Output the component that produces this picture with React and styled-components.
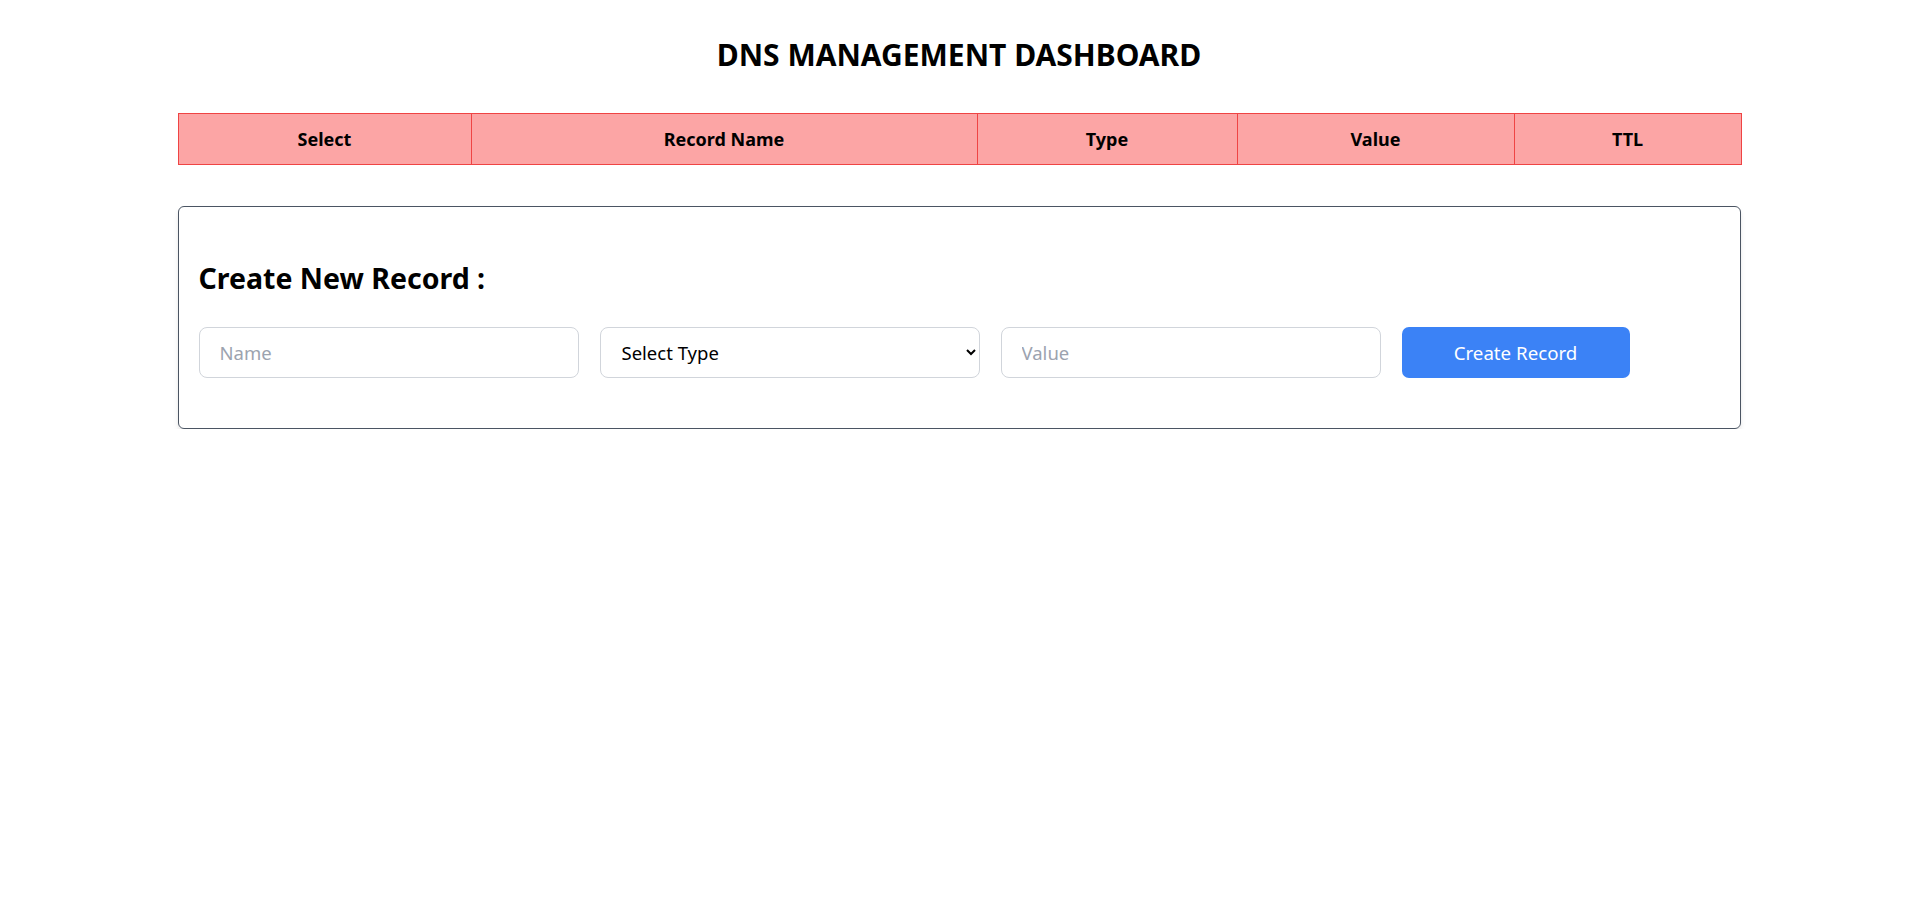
import React from "react";
import styled, { createGlobalStyle } from "styled-components";

const GlobalStyle = createGlobalStyle`
  body {
    margin: 0;
    background: #ffffff;
    font-family: "Noto Sans", "Open Sans", sans-serif;
    color: #000000;
  }
`;

const columns = [
  { label: "Select", width: 293 },
  { label: "Record Name", width: 506 },
  { label: "Type", width: 260 },
  { label: "Value", width: 277 },
  { label: "TTL", width: 227 },
];

const recordTypes = ["A", "AAAA", "CNAME", "MX", "NS", "PTR", "SOA", "SRV", "TXT"];

export default function App() {
  return (
    <>
      <GlobalStyle />
      <Page>
        <Title>DNS MANAGEMENT DASHBOARD</Title>
        <RecordTable>
          <colgroup>
            {columns.map((c) => (
              <col key={c.label} style={{ width: c.width }} />
            ))}
          </colgroup>
          <thead>
            <tr>
              {columns.map((c) => (
                <HeadCell key={c.label}>{c.label}</HeadCell>
              ))}
            </tr>
          </thead>
        </RecordTable>

        <Card>
          <CardTitle>Create New Record :</CardTitle>
          <FormRow>
            <TextInput type="text" placeholder="Name" />
            <TypeSelect defaultValue="">
              <option value="" disabled>
                Select Type
              </option>
              {recordTypes.map((t) => (
                <option key={t} value={t}>
                  {t}
                </option>
              ))}
            </TypeSelect>
            <TextInput type="text" placeholder="Value" />
            <CreateButton>Create Record</CreateButton>
          </FormRow>
        </Card>
      </Page>
    </>
  );
}

const Page = styled.div`
  box-sizing: border-box;
  width: 1563px;
  margin: 0 auto;
  padding-top: 37px;
`;

const Title = styled.h1`
  margin: 0 0 40px;
  text-align: center;
  font-size: 30px;
  line-height: 36px;
  font-weight: 700;
`;

const RecordTable = styled.table`
  width: 100%;
  table-layout: fixed;
  border-collapse: collapse;
  border: 1px solid #ef4444;
  background: #fca5a5;
`;

const HeadCell = styled.th`
  height: 50px;
  padding: 0;
  border: 1px solid #ef4444;
  font-size: 18px;
  font-weight: 700;
  text-align: center;
  vertical-align: middle;
`;

const Card = styled.div`
  margin-top: 41px;
  padding: 54px 20px 50px;
  border: 1px solid #4b5563;
  border-radius: 6px;
  box-shadow: 0 4px 6px -1px rgba(0, 0, 0, 0.1), 0 2px 4px -2px rgba(0, 0, 0, 0.1);
`;

const CardTitle = styled.h2`
  margin: 0 0 32px;
  font-size: 28.5px;
  line-height: 34px;
  font-weight: 700;
`;

const FormRow = styled.div`
  display: flex;
  align-items: center;
  gap: 20.5px;
`;

const fieldBase = `
  box-sizing: border-box;
  width: 380.5px;
  height: 51px;
  padding: 0 20px;
  border: 1px solid #d1d5db;
  border-radius: 8px;
  background: #ffffff;
  font-family: "Noto Sans", "Open Sans", sans-serif;
  font-size: 18.5px;
  color: #000000;
  outline: none;
`;

const TextInput = styled.input`
  ${fieldBase}

  &::placeholder {
    color: #9ca3af;
  }
`;

const TypeSelect = styled.select`
  ${fieldBase}
  padding: 0 12px 0 17px;
`;

const CreateButton = styled.button`
  box-sizing: border-box;
  width: 228px;
  height: 51px;
  border: none;
  border-radius: 7px;
  background: #3b82f6;
  color: #ffffff;
  font-family: "Noto Sans", "Open Sans", sans-serif;
  font-size: 18.7px;
  cursor: pointer;
`;
